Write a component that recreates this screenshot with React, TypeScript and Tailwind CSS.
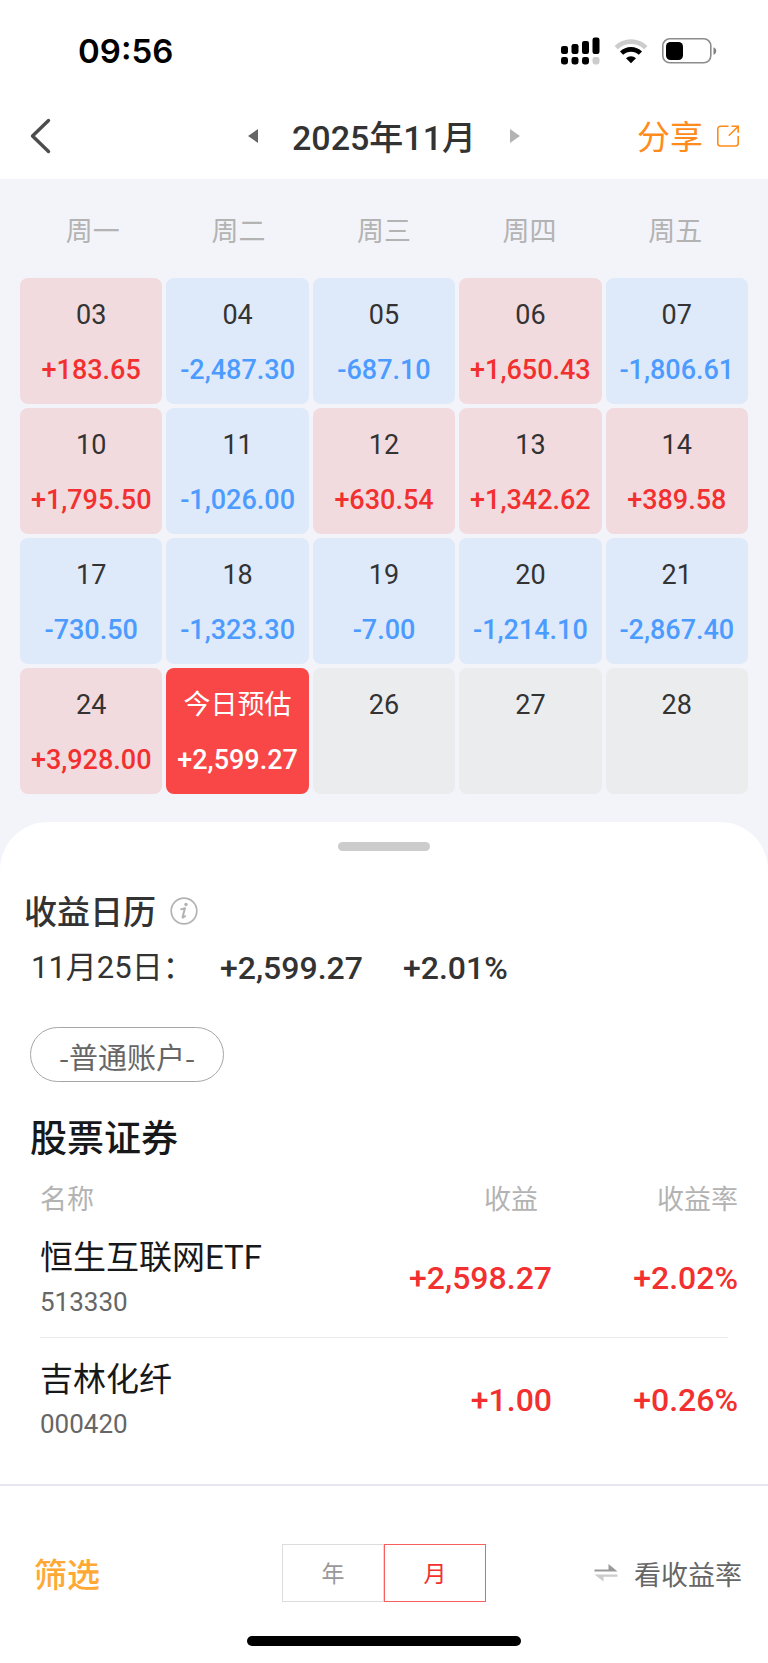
import { useState } from 'react';
import clsx from 'clsx';

type Day = {
  label: string;
  amount?: string;
  today?: boolean;
};

type Holding = {
  name: string;
  code: string;
  profit: string;
  rate: string;
};

const weekdays = ['周一', '周二', '周三', '周四', '周五'];

const days: Day[] = [
  { label: '03', amount: '+183.65' },
  { label: '04', amount: '-2,487.30' },
  { label: '05', amount: '-687.10' },
  { label: '06', amount: '+1,650.43' },
  { label: '07', amount: '-1,806.61' },
  { label: '10', amount: '+1,795.50' },
  { label: '11', amount: '-1,026.00' },
  { label: '12', amount: '+630.54' },
  { label: '13', amount: '+1,342.62' },
  { label: '14', amount: '+389.58' },
  { label: '17', amount: '-730.50' },
  { label: '18', amount: '-1,323.30' },
  { label: '19', amount: '-7.00' },
  { label: '20', amount: '-1,214.10' },
  { label: '21', amount: '-2,867.40' },
  { label: '24', amount: '+3,928.00' },
  { label: '今日预估', amount: '+2,599.27', today: true },
  { label: '26' },
  { label: '27' },
  { label: '28' },
];

const holdings: Holding[] = [
  { name: '恒生互联网ETF', code: '513330', profit: '+2,598.27', rate: '+2.02%' },
  { name: '吉林化纤', code: '000420', profit: '+1.00', rate: '+0.26%' },
];

function StatusBar() {
  return (
    <div className="flex h-24 items-center justify-between bg-white pt-[6px] pr-[51px] pl-[78px]">
      <span className="font-['Inter',sans-serif] text-[33px] leading-10 font-semibold text-black">09:56</span>
      <div className="flex items-center gap-[14px]">
        <svg width="39" height="28" viewBox="0 0 39 28" aria-hidden="true">
          <rect x="0" y="9" width="7" height="8" rx="2.2" />
          <rect x="10.5" y="7" width="7" height="10" rx="2.2" />
          <rect x="21" y="4" width="7" height="13" rx="2.2" />
          <rect x="31.5" y="0.5" width="7" height="16.5" rx="2.2" />
          <rect x="0" y="20" width="7" height="7.5" rx="2.4" />
          <rect x="10.5" y="20" width="7" height="7.5" rx="2.4" />
          <rect x="21" y="20" width="7" height="7.5" rx="2.4" />
          <rect x="31.5" y="20" width="7" height="7.5" rx="2.4" fill="#cccccc" />
        </svg>
        <svg width="34" height="25" viewBox="0 0 34 25" fill="none" aria-hidden="true">
          <path d="M2.2 8.6a21.2 21.2 0 0 1 29.6 0" stroke="#cccccc" strokeWidth="4.6" />
          <path d="M7.6 14.2a13.4 13.4 0 0 1 18.8 0" stroke="#000" strokeWidth="4.6" />
          <path d="M17 24.3 12 19.2a7.2 7.2 0 0 1 10 0Z" fill="#000" />
        </svg>
        <svg width="55" height="26" viewBox="0 0 55 26" aria-hidden="true">
          <rect x="0.8" y="0.8" width="48" height="24" rx="7" fill="none" stroke="#8c8c8c" strokeWidth="1.6" />
          <rect x="4" y="4" width="17" height="18" rx="4.5" />
          <path d="M51.500 9.200c1.800.7 2.700 2 2.700 3.800s-.9 3.100-2.700 3.800Z" fill="#808080" />
        </svg>
      </div>
    </div>
  );
}

function NavBar() {
  return (
    <header className="grid h-[83px] grid-cols-[1fr_auto_1fr] items-center bg-white px-7 pb-[3px]">
      <button type="button" aria-label="返回" className="justify-self-start">
        <svg width="24" height="36" viewBox="0 0 24 36" fill="none" aria-hidden="true">
          <path d="M20.500 2.500 4.500 18l16 15.500" stroke="#4d4d4d" strokeWidth="3.400" strokeLinecap="round" strokeLinejoin="round" />
        </svg>
      </button>
      <div className="flex items-center gap-[34px]">
        <button type="button" aria-label="上个月">
          <svg width="10" height="14" viewBox="0 0 10 14" aria-hidden="true">
            <path d="M10 0v14L0 7Z" fill="#666666" />
          </svg>
        </button>
        <h1 className="pt-1 text-[34px] leading-10 font-medium text-[#333333]">2025年11月</h1>
        <button type="button" aria-label="下个月">
          <svg width="10" height="14" viewBox="0 0 10 14" aria-hidden="true">
            <path d="M0 0v14l10-7Z" fill="#b3b3b3" />
          </svg>
        </button>
      </div>
      <button type="button" className="flex items-center gap-[13px] justify-self-end text-[33px] leading-10 text-[#ff8c1a]">
        <span className="pt-1">分享</span>
        <svg width="24" height="24" viewBox="0 0 24 24" fill="none" stroke="#ff8c1a" strokeWidth="1.600" aria-hidden="true">
          <path d="M12.500 2.200H4.500a2.700 2.700 0 0 0-2.700 2.700v14.400A2.700 2.700 0 0 0 4.500 22h15a2.700 2.700 0 0 0 2.700-2.700V12" />
          <path d="M15.500 2.200h6.700v6.600M22 2.500 12.800 11.700" />
        </svg>
      </button>
    </header>
  );
}

function DayCell({ day }: { day: Day }) {
  const gain = day.amount?.startsWith('+');

  return (
    <button
      type="button"
      className={clsx(
        'flex h-[126px] flex-col items-center rounded-lg pt-[15px] text-[27px]',
        day.today && 'bg-[#f94747] text-white',
        !day.today && !day.amount && 'bg-[#ebecee]',
        !day.today && day.amount && (gain ? 'bg-[#f2dbdf]' : 'bg-[#dee9fa]'),
      )}
    >
      <span className={clsx('leading-11', !day.today && 'text-[#333333]')}>{day.label}</span>
      {day.amount && (
        <span
          className={clsx(
            'mt-[11px] leading-11 font-medium',
            !day.today && (gain ? 'text-[#f23030]' : 'text-[#4c9bff]'),
          )}
        >
          {day.amount}
        </span>
      )}
    </button>
  );
}

function HoldingsTable() {
  return (
    <table className="w-full table-fixed border-collapse">
      <colgroup>
        <col />
        <col className="w-[200px]" />
        <col className="w-[186px]" />
      </colgroup>
      <thead>
        <tr className="text-[27px] leading-8 text-[#b3b3b3]">
          <th scope="col" className="pt-4 pl-10 text-left font-normal">名称</th>
          <th scope="col" className="pt-4 pr-[14px] text-right font-normal">收益</th>
          <th scope="col" className="pt-4 text-right font-normal">收益率</th>
        </tr>
      </thead>
      <tbody>
        {holdings.map((item, index) => (
          <tr key={item.code} className="relative">
            <td className="pt-5 pb-[14px] pl-10">
              <div className="text-[33px] leading-11 text-[#17181a]">{item.name}</div>
              <div className="text-[26px] leading-11 text-[#666666]">{item.code}</div>
              {index < holdings.length - 1 && (
                <div className="absolute right-[10px] bottom-0 left-10 h-px bg-[#ebebf0]" />
              )}
            </td>
            <td className="pt-5 pb-[18px] text-right text-[32px] leading-11 font-medium text-[#f23030]">{item.profit}</td>
            <td className="pt-5 pb-[18px] text-right text-[32px] leading-11 font-medium text-[#f23030]">{item.rate}</td>
          </tr>
        ))}
      </tbody>
    </table>
  );
}

function Footer() {
  const [mode, setMode] = useState<'year' | 'month'>('month');
  const base = 'w-[102px] border pt-1 text-[23px]';
  const active = 'border-[#f95f5f] text-[#f23030]';
  const idle = 'border-[#dcdcdc] text-[#999999]';

  return (
    <footer className="border-t-2 border-[#e6e6f0] bg-white pb-4">
      <div className="grid grid-cols-[1fr_auto_1fr] items-center px-[26px] pt-[58px]">
        <button type="button" className="justify-self-start pt-[6px] pl-2 text-[33px] leading-11 font-medium text-[#ffa834]">
          筛选
        </button>
        <div className="flex h-[58px]">
          <button
            type="button"
            aria-pressed={mode === 'year'}
            onClick={() => setMode('year')}
            className={clsx(base, mode === 'year' ? active : idle)}
          >
            年
          </button>
          <button
            type="button"
            aria-pressed={mode === 'month'}
            onClick={() => setMode('month')}
            className={clsx(base, mode === 'month' ? active : idle)}
          >
            月
          </button>
        </div>
        <button type="button" className="flex items-center gap-4 justify-self-end text-[27px] leading-11 text-[#666666]">
          <svg width="24" height="18" viewBox="0 0 24 18" aria-hidden="true">
            <path d="M0.500 5.500H14.500V0L23.500 7.500H0.500Z" fill="#999999" />
            <path d="M23.500 10.500H0.500L9.500 17.500V12.700H23.500Z" fill="#cccccc" />
          </svg>
          <span className="pt-[6px]">看收益率</span>
        </button>
      </div>
      <div className="mx-auto mt-[34px] h-[10px] w-[274px] rounded-full bg-black" />
    </footer>
  );
}

export default function App() {
  return (
    <div className="w-full bg-[#f3f4fa] font-['Roboto','Noto_Sans_CJK_SC',sans-serif]">
      <StatusBar />
      <NavBar />

      <section className="px-5 pb-7">
        <div className="grid h-[99px] grid-cols-5 items-center gap-1 px-[2px] pt-[6px] text-center text-[27px] leading-10 text-[#b3b3b3]">
          {weekdays.map((name) => (
            <span key={name}>{name}</span>
          ))}
        </div>
        <div className="grid grid-cols-5 gap-1">
          {days.map((day) => (
            <DayCell key={day.label} day={day} />
          ))}
        </div>
      </section>

      <main className="rounded-t-[48px] bg-white pt-5 pb-6">
        <div className="mx-auto h-[9px] w-[92px] rounded-full bg-[#cccccc]" />

        <div className="mt-9 flex h-12 items-center gap-[14px] pl-6">
          <h2 className="pt-1 text-[33px] leading-11 font-medium text-[#333333]">收益日历</h2>
          <button type="button" aria-label="说明">
            <svg width="28" height="28" viewBox="0 0 28 28" fill="none" aria-hidden="true">
              <circle cx="14" cy="14" r="12.800" stroke="#b3b3b3" strokeWidth="1.700" />
              <circle cx="16" cy="7.500" r="1.700" fill="#b3b3b3" />
              <path d="M11.200 12.200c1.300-.1 2.400-.5 3.800-1l-2.400 8.600c-.3 1.300.9.900 2.500-.7" stroke="#b3b3b3" strokeWidth="2" strokeLinecap="round" strokeLinejoin="round" />
            </svg>
          </button>
        </div>

        <div className="mt-px flex h-16 items-center pl-[31px] text-[#333333]">
          <span className="w-[189px] text-[31px] leading-11">11月25日：</span>
          <span className="text-[32px] leading-11 font-medium">+2,599.27</span>
          <span className="ml-10 text-[32px] leading-11 font-medium">+2.01%</span>
        </div>

        <button
          type="button"
          className="mt-[27px] ml-[30px] block h-[55px] rounded-full border border-[#a6a6a6] px-7 pt-[2px] font-['Noto_Sans_CJK_SC',sans-serif] text-[29px] leading-11 text-[#666666]"
        >
          -普通账户-
        </button>

        <h2 className="mt-[30px] pl-[30px] text-[37px] leading-14 font-medium text-[#17181a]">股票证券</h2>
        <div className="pr-[30px]">
          <HoldingsTable />
        </div>
      </main>

      <Footer />
    </div>
  );
}
